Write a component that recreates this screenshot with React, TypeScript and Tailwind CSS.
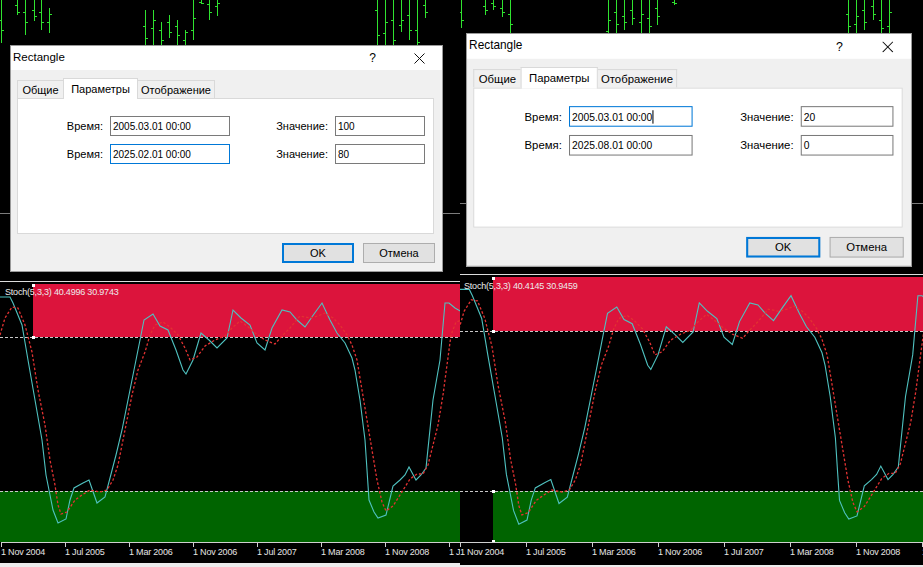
import React from 'react';

type Pt = [number, number];
type Bar = [number, number, number, number, number];

// stochastic main line, in left-panel page coords
const MAIN: Pt[] = [
  [0, 297], [10, 297], [13, 303], [22, 325], [28, 360], [35, 400], [42, 440], [46, 475], [49, 490], [53, 510],
  [58, 523], [66, 519], [70, 500], [74, 488], [83, 483], [89, 480], [97, 503], [105, 497], [110, 478], [116, 455],
  [122, 430], [128, 400], [134, 370], [140, 340], [144, 320], [153, 314], [160, 326], [168, 330], [176, 350],
  [183, 370], [186, 374], [193, 360], [201, 333], [209, 340], [217, 348], [227, 338], [233, 310], [241, 318],
  [250, 325], [257, 343], [265, 350], [272, 328], [282, 310], [290, 312], [297, 320], [305, 327], [314, 314],
  [322, 303], [330, 320], [337, 333], [345, 343], [352, 358], [355, 370], [360, 400], [365, 440], [367, 470],
  [369, 500], [374, 512], [378, 518], [386, 515], [393, 486], [400, 480], [405, 475], [409, 467], [416, 480],
  [421, 475], [426, 468], [433, 400], [440, 360], [445, 303], [449, 303], [455, 308], [462, 312], [475, 312],
];

const SIGNAL: Pt[] = [
  [0, 335], [5, 318], [12, 307], [18, 308], [25, 325], [32, 352], [38, 390], [45, 425], [50, 460], [55, 485],
  [58, 505], [61, 514], [67, 512], [75, 500], [82, 495], [90, 490], [100, 492], [107, 490], [113, 480], [118, 465],
  [125, 430], [132, 395], [138, 370], [145, 352], [150, 335], [155, 325], [163, 322], [170, 327], [178, 335],
  [185, 348], [190, 360], [197, 357], [205, 346], [215, 340], [225, 336], [232, 328], [240, 321], [247, 326],
  [255, 333], [265, 340], [275, 344], [282, 336], [290, 328], [300, 316], [310, 318], [318, 316], [325, 313],
  [333, 318], [340, 325], [347, 335], [352, 345], [357, 360], [362, 390], [367, 420], [372, 450], [377, 480],
  [382, 502], [386, 511], [393, 506], [400, 495], [405, 487], [410, 479], [417, 474], [423, 474], [428, 465],
  [433, 445], [438, 425], [443, 395], [447, 365], [451, 335], [456, 322], [462, 320], [475, 320],
];

const LABELS = ['1 Nov 2004', '1 Jul 2005', '1 Mar 2006', '1 Nov 2006', '1 Jul 2007', '1 Mar 2008', '1 Nov 2008', '1 Jul 2009'];

// x, high, low, open, close
const LEFT_BARS: Bar[] = [
  [1, 0, 43, 20, 30], [17, 0, 15, 5, 12], [25, 0, 35, 12, 22], [34, 0, 21, 10, 16], [41, 0, 30, 12, 22],
  [49, 8, 33, 22, 14], [145, 10, 45, 26, 38], [153, 10, 45, 28, 20], [161, 22, 45, 30, 40], [169, 15, 38, 22, 32],
  [177, 20, 45, 26, 35], [185, 30, 45, 40, 32], [193, 0, 40, 30, 18], [201, 0, 4, 2, 3], [209, 0, 20, 4, 12],
  [217, 0, 16, 6, 3], [377, 0, 45, 10, 35], [385, 0, 45, 33, 22], [393, 0, 45, 20, 40], [401, 0, 32, 25, 20],
  [409, 0, 40, 15, 30], [417, 0, 45, 30, 42], [425, 0, 18, 5, 12],
];

const RIGHT_BARS: Bar[] = [
  [1, 0, 28, 12, 20], [25, 0, 15, 6, 10], [33, 0, 10, 3, 6], [42, 0, 17, 8, 12], [50, 0, 33, 14, 24],
  [148, 0, 33, 31, 20], [156, 0, 33, 12, 24], [164, 0, 30, 16, 22], [172, 0, 25, 10, 18], [181, 0, 33, 22, 14],
  [189, 0, 33, 18, 26], [197, 0, 25, 8, 16], [214, 0, 5, 2, 3], [388, 0, 33, 14, 26], [396, 0, 33, 24, 16],
  [404, 0, 30, 10, 22], [413, 0, 20, 6, 14], [421, 0, 33, 20, 28], [429, 0, 33, 26, 12],
];

const pts = (list: Pt[], fx: (x: number) => number, fy: (y: number) => number) =>
  list.map(([x, y]) => `${fx(x).toFixed(1)},${fy(y).toFixed(1)}`).join(' ');

function PriceChart({ bars, gridY, width, height }: { bars: Bar[]; gridY: number; width: number; height: number }) {
  return (
    <svg width={width} height={height} className="block">
      <line x1={0} x2={width} y1={gridY + 0.5} y2={gridY + 0.5} stroke="#7c7c7c" />
      {bars.map(([x, t, b, o, c], i) => (
        <g key={i} stroke="#2fe22f" strokeWidth={1}>
          <line x1={x + 0.5} x2={x + 0.5} y1={t} y2={b} />
          <line x1={x - 2} x2={x + 0.5} y1={o + 0.5} y2={o + 0.5} />
          <line x1={x + 0.5} x2={x + 3} y1={c + 0.5} y2={c + 0.5} />
        </g>
      ))}
    </svg>
  );
}

function Field({ value, focused, caret, className }: { value: string; focused?: boolean; caret?: boolean; className: string }) {
  return (
    <div
      className={`h-[20px] bg-white border flex items-center pl-[2px] text-[10px] text-black ${
        focused ? 'border-[#0078d7]' : 'border-[#7a7a7a]'
      } ${className}`}
    >
      {value}
      {caret && <span className="w-px h-[13px] bg-black" />}
    </div>
  );
}

type RowData = { time: string; val: string; focus?: boolean; caret?: boolean };

function RectDialog({ rows, className }: { rows: RowData[]; className: string }) {
  return (
    <div
      className={`absolute w-[433px] h-[227px] flex flex-col bg-[#f0f0f0] border border-[#9a9a9a] text-black font-['Liberation_Sans',Arial,sans-serif] ${className}`}
    >
      <div className="h-[24px] bg-white flex items-center pl-[2px] pr-[17px]">
        <span className="text-[11.5px]">Rectangle</span>
        <span className="ml-auto mr-[38px] text-[12px]">?</span>
        <svg width="11" height="11" viewBox="0 0 11 11">
          <path d="M0.5 0.5 L10.5 10.5 M10.5 0.5 L0.5 10.5" stroke="#111" strokeWidth="1" />
        </svg>
      </div>

      <div className="flex-1 flex flex-col pl-[6px] pr-[8px] pt-[8px] pb-[8px]">
        {/* tabs */}
        <div className="flex items-end h-[20px] text-[11px]">
          <div className="w-[47px] h-[18px] border border-b-0 border-[#d9d9d9] flex items-center justify-center pt-px">
            Общие
          </div>
          <div className="relative z-10 -ml-px -mb-px w-[75px] h-[21px] bg-white border border-b-0 border-[#d9d9d9] flex items-center justify-center">
            Параметры
          </div>
          <div className="-ml-px w-[78px] h-[18px] border border-b-0 border-[#d9d9d9] flex items-center justify-center pt-px">
            Отображение
          </div>
        </div>

        <div className="h-[136px] bg-white border border-[#d9d9d9] flex flex-col gap-[8px] pt-[17px] text-[11px]">
          {rows.map((r, i) => (
            <div key={i} className="flex items-center">
              <span className="w-[85px] text-right">Время:</span>
              <Field value={r.time} focused={r.focus} caret={r.caret} className="ml-[7px] w-[120px]" />
              <span className="w-[98px] text-right">Значение:</span>
              <Field value={r.val} className="ml-[7px] w-[90px]" />
            </div>
          ))}
        </div>

        <div className="mt-[9px] -mr-px flex justify-end gap-[9px] text-[11px]">
          <button className="w-[72px] h-[20px] bg-[#e1e1e1] border-2 border-[#0078d7] flex items-center justify-center">
            OK
          </button>
          <button className="w-[72px] h-[20px] bg-[#e1e1e1] border border-[#adadad] flex items-center justify-center">
            Отмена
          </button>
        </div>
      </div>
    </div>
  );
}

function TimeAxis({ itemClass, className }: { itemClass: string; className: string }) {
  return (
    <div className={`flex flex-col bg-black overflow-hidden font-['Liberation_Sans',Arial,sans-serif] ${className}`}>
      <div className="h-px bg-[#cfcfcf]" />
      <div className="flex">
        {LABELS.map((l) => (
          <div key={l} className={`shrink-0 flex flex-col ${itemClass}`}>
            <div className="w-px h-[4px] bg-[#cfcfcf]" />
            <span className="text-[9px] leading-[10px] text-[#e6e6e6] tracking-[-0.2px] whitespace-nowrap">{l}</span>
          </div>
        ))}
      </div>
    </div>
  );
}

type Zone = { x: number; y: number; w: number; h: number; fill: string };

function StochWindow({
  width,
  height,
  zones,
  levels,
  handles,
  fx,
  fy,
  legend,
  legendClass,
}: {
  width: number;
  height: number;
  zones: Zone[];
  levels: number[];
  handles: Pt[];
  fx: (x: number) => number;
  fy: (y: number) => number;
  legend: string;
  legendClass: string;
}) {
  return (
    <div className="relative bg-black overflow-hidden" style={{ width, height }}>
      <svg width={width} height={height} className="block">
        {zones.map((z, i) => (
          <rect key={i} x={z.x} y={z.y} width={z.w} height={z.h} fill={z.fill} />
        ))}
        {levels.map((y) => (
          <line key={y} x1={0} x2={width} y1={y + 0.5} y2={y + 0.5} stroke="#c8c8c8" strokeDasharray="3 2" />
        ))}
        <polyline points={pts(MAIN, fx, fy)} fill="none" stroke="#4fc2c0" strokeWidth={1.1} />
        <polyline points={pts(SIGNAL, fx, fy)} fill="none" stroke="#e23232" strokeWidth={1.3} strokeDasharray="2.5 2" />
        {handles.map(([x, y], i) => (
          <rect key={i} x={x - 1} y={y - 1} width={3} height={3} fill="#ffffff" />
        ))}
      </svg>
      <span
        className={`absolute text-[9px] leading-[10px] text-[#ececec] tracking-[-0.2px] whitespace-nowrap font-['Liberation_Sans',Arial,sans-serif] ${legendClass}`}
      >
        {legend}
      </span>
    </div>
  );
}

const App: React.FC = () => {
  return (
    <div className="w-[923px] h-[567px] flex bg-black overflow-hidden">
      {/* Left screenshot */}
      <div className="w-[460px] shrink-0 flex flex-col overflow-hidden">
        <div className="relative h-[281px]">
          <PriceChart bars={LEFT_BARS} gridY={213} width={460} height={281} />
          <RectDialog
            className="left-[10px] top-[45px]"
            rows={[
              { time: '2005.03.01 00:00', val: '100' },
              { time: '2025.02.01 00:00', val: '80', focus: true },
            ]}
          />
        </div>
        <div className="h-px bg-[#dcdcdc]" />
        <div className="h-[2px]" />
        <StochWindow
          width={460}
          height={258}
          zones={[
            { x: 33, y: 0, w: 427, h: 53, fill: '#dc143c' },
            { x: 0, y: 207, w: 460, h: 51, fill: '#006400' },
          ]}
          levels={[53, 207]}
          handles={[
            [33, 1],
            [33, 53],
          ]}
          fx={(x) => x}
          fy={(y) => y - 284}
          legend="Stoch(5,3,3) 40.4996 30.9743"
          legendClass="left-[5px] top-[3px]"
        />
        <TimeAxis className="h-[21px] pl-px" itemClass="w-[64px]" />
        <div className="flex-1 bg-[#ececec]" />
      </div>

      {/* Right screenshot */}
      <div className="w-[463px] shrink-0 flex flex-col overflow-hidden">
        <div className="relative h-[274px]">
          <PriceChart bars={RIGHT_BARS} gridY={203} width={463} height={274} />
          <RectDialog
            className="left-[6px] top-[33px] scale-[1.03] origin-top-left"
            rows={[
              { time: '2005.03.01 00:00', val: '20', focus: true, caret: true },
              { time: '2025.08.01 00:00', val: '0' },
            ]}
          />
        </div>
        <div className="h-px bg-[#dcdcdc]" />
        <div className="h-[2px]" />
        <StochWindow
          width={463}
          height={265}
          zones={[
            { x: 33, y: 0, w: 430, h: 54, fill: '#dc143c' },
            { x: 33, y: 214, w: 430, h: 51, fill: '#006400' },
          ]}
          levels={[54, 214]}
          handles={[
            [33, 1],
            [33, 54],
            [33, 214],
            [33, 264],
          ]}
          fx={(x) => ((x - 1) * 66) / 64}
          fy={(y) => 491 - (491 - y) * 1.039 - 277}
          legend="Stoch(5,3,3) 40.4145 30.9459"
          legendClass="left-[4px] top-[4px]"
        />
        <TimeAxis className="h-[23px]" itemClass="w-[66px]" />
        <div className="flex-1 bg-[#ececec]" />
      </div>
    </div>
  );
};

export default App;
